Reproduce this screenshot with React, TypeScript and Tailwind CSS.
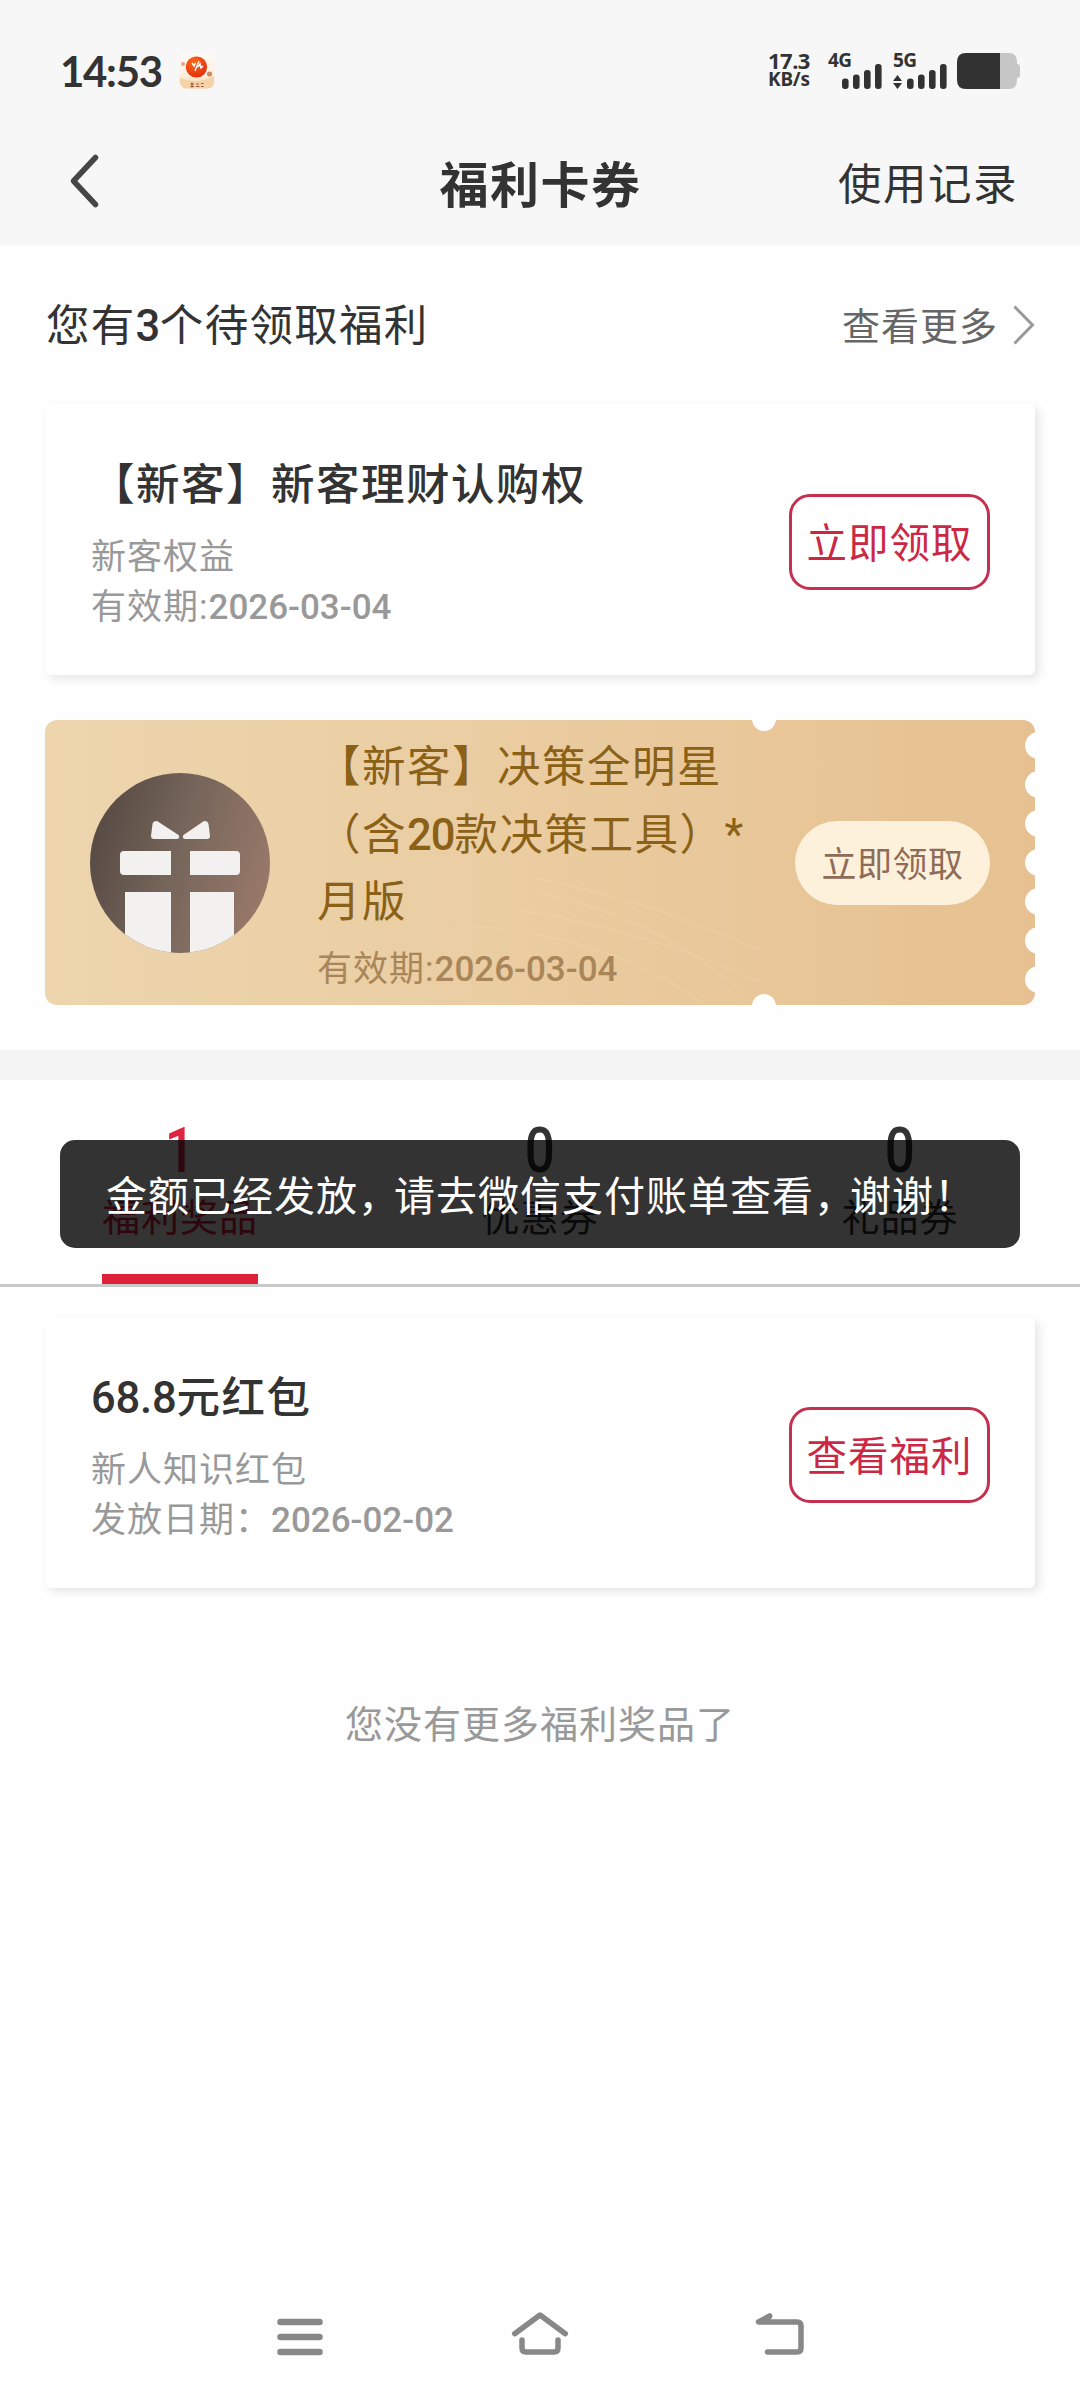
import { clsx } from 'clsx';

interface BenefitCardProps {
  title: string;
  amount?: string;
  subtitle: string;
  dateLabel: string;
  date: string;
  action: string;
}

const TABS = [
  { label: '福利奖品', count: 1, active: true },
  { label: '优惠券', count: 0, active: false },
  { label: '礼品券', count: 0, active: false },
];

const TICKET_TEETH = [0, 1, 2, 3, 4, 5, 6];

function SignalBars() {
  return (
    <svg className="w-10 h-[25px]" viewBox="0 0 40 25" fill="#323232">
      <rect x="0" y="14.5" width="6.6" height="10.5" rx="3" />
      <rect x="11" y="10.5" width="6.6" height="14.5" rx="3" />
      <rect x="22" y="6" width="6.6" height="19" rx="3" />
      <rect x="33" y="0" width="6.6" height="25" rx="3" />
    </svg>
  );
}

function StatusBar() {
  return (
    <div className="h-[124px] pt-[53px] pl-[60px] pr-[60px] flex justify-between items-start">
      <div className="flex items-start">
        <span className="w-[119px] font-[Lato] font-bold text-[42px] leading-9 tracking-[-1.3px] whitespace-nowrap">
          14:53
        </span>
        {/* Notification app icon */}
        <svg className="w-9 h-9" viewBox="0 0 36 36">
          <defs>
            <linearGradient id="appBg" x1="0" y1="0" x2="0" y2="1">
              <stop offset="0" stopColor="#fffaf5" />
              <stop offset="0.65" stopColor="#fdeedd" />
              <stop offset="1" stopColor="#f5c898" />
            </linearGradient>
            <radialGradient id="appBall" cx="0.4" cy="0.3" r="0.75">
              <stop offset="0" stopColor="#fb6b1c" />
              <stop offset="1" stopColor="#e52a0c" />
            </radialGradient>
          </defs>
          <rect x="0.5" y="0.5" width="35" height="35" rx="7" fill="url(#appBg)" />
          <path d="M1 25Q18 32 35 23V28Q35 35 28 35H8Q1 35 1 28Z" fill="#f6d2a8" />
          <circle cx="17.5" cy="14" r="10.6" fill="url(#appBall)" />
          <path d="M13 10l2 3 1.5-3M20 8l-4 10M19 14l2-3 1 4 2-2" stroke="#fff" strokeWidth="1.4" fill="none" />
          <circle cx="4" cy="11" r="2" fill="#ec9c8b" />
          <circle cx="30.5" cy="21" r="2.6" fill="#d08860" />
          <path d="M11.5 31h3.5M11.5 33.5h3.5M13 29.5v5M17 31h3M17 33.5h3.5M22 30.5h2.5M22 33.5h2.5" stroke="#9c5b38" strokeWidth="1.2" />
        </svg>
      </div>

      <div className="flex items-start h-9 font-['Noto_Sans'] font-bold">
        <div className="w-[60px] flex flex-col whitespace-nowrap">
          <span className="text-[22px] leading-[15px] tracking-[-0.5px]">17.3</span>
          <span className="text-[19px] leading-[19px] pt-0.5 tracking-[-0.2px]">KB/s</span>
        </div>
        <div className="w-[65px] relative pt-[11px] pl-3.5">
          <span className="absolute left-0 top-0 text-[19px] leading-[14px] tracking-[-0.5px]">4G</span>
          <SignalBars />
        </div>
        <div className="w-16 relative pt-[11px] pl-3.5">
          <span className="absolute left-0 top-0 text-[19px] leading-[14px] tracking-[-0.5px]">5G</span>
          <svg className="absolute left-0 bottom-0 w-[9px] h-[14px]" viewBox="0 0 9 14" fill="#323232">
            <path d="M4.5 0L9 6H0ZM4.5 14L9 8H0Z" />
          </svg>
          <SignalBars />
        </div>
        <svg className="w-[63px] h-9" viewBox="0 0 63 36">
          <path d="M43 0H52Q60 0 60 9V11Q63 11 63 14V22Q63 25 60 25V27Q60 36 52 36H43Z" fill="#c6c6c6" />
          <path d="M9 0H43V36H9Q0 36 0 27V9Q0 0 9 0Z" fill="#323232" />
        </svg>
      </div>
    </div>
  );
}

function Header() {
  return (
    <header className="h-[121px] grid grid-cols-3 items-center pl-[67px] pr-[62px]">
      <svg className="w-9 h-[60px] -mt-2" viewBox="0 0 36 60" fill="none">
        <path d="M28.500 6.500L6.500 30L28.500 53.500" stroke="#464646" strokeWidth="5.500" strokeLinecap="round" strokeLinejoin="round" />
      </svg>
      <h1 className="text-center text-[49px] leading-none font-bold tracking-[1.5px] whitespace-nowrap pr-1 pt-1">
        福利卡券
      </h1>
      <span className="text-right text-[43.5px] leading-none tracking-[1.5px] pt-0.5">使用记录</span>
    </header>
  );
}

function BenefitCard({ title, amount, subtitle, dateLabel, date, action }: BenefitCardProps) {
  return (
    <div className="mx-[45px] h-[271px] px-[45px] rounded-md bg-white shadow-[4px_4px_9px_rgba(0,0,0,0.09)] flex justify-between">
      <div className="pt-[49px] pl-px whitespace-nowrap">
        <h3 className="text-[43.5px] leading-[66px] font-medium tracking-[1.5px]">
          {amount && <span className="tracking-[-0.2px]">{amount}</span>}
          {title}
        </h3>
        <p className="mt-3.5 text-[35px] leading-[50px] tracking-[1px] text-[#999]">{subtitle}</p>
        <p className="text-[35px] leading-[50px] tracking-[1px] text-[#999]">
          {dateLabel}
          <span className="font-medium tracking-normal">{date}</span>
        </p>
      </div>
      <button className="mt-[90px] w-[201px] h-24 pt-1 rounded-[21px] border-3 border-[#c5304f] text-[#cc2845] text-[40.5px] leading-none tracking-[1px] whitespace-nowrap">
        {action}
      </button>
    </div>
  );
}

function GiftIcon() {
  return (
    <svg className="w-[180px] h-[180px] mt-[53px]" viewBox="0 0 180 180">
      <defs>
        <linearGradient id="giftBg" x1="0" y1="0.3" x2="1" y2="0.6">
          <stop offset="0" stopColor="#564a43" />
          <stop offset="0.5" stopColor="#77665b" />
          <stop offset="1" stopColor="#98796a" />
        </linearGradient>
        <clipPath id="giftClip">
          <circle cx="90" cy="90" r="90" />
        </clipPath>
      </defs>
      <circle cx="90" cy="90" r="90" fill="url(#giftBg)" />
      <g clipPath="url(#giftClip)" fill="#f3f1ef">
        <path d="M67 48Q63 48 62.500 51L61 63Q61 66 64 66H87Q90.500 65 88.500 62Z" />
        <path d="M114 48Q118 48 118.500 51L120 63Q120 66 117 66H95Q91.500 65 93.500 62Z" />
        <path d="M34 78H81V102H34Q30 102 30 98V82Q30 78 34 78Z" />
        <path d="M100 78H146Q150 78 150 82V98Q150 102 146 102H100Z" />
        <path d="M35 119H81V180H35ZM100 119H144V180H100Z" />
      </g>
    </svg>
  );
}

function Ticket() {
  return (
    <div className="relative mx-[45px] mt-[45px] h-[285px] px-[45px] rounded-xl overflow-hidden bg-linear-to-r from-[#edd5ae] via-[#eacca0] to-[#e6c090] flex">
      <svg className="absolute inset-0 w-full h-full" viewBox="0 0 990 285" fill="none" stroke="#f3dcb4" strokeOpacity="0.25" strokeWidth="2">
        <path d="M490 158Q600 180 715 230M490 172Q620 200 700 275M400 205Q560 210 660 285M440 185Q590 205 715 262" />
      </svg>
      <GiftIcon />
      <div className="relative ml-[47px] pt-3.5 w-[450px]">
        <h3 className="text-[43.5px] leading-[67.5px] tracking-[1.5px] text-[#8a6117] whitespace-nowrap">
          【新客】决策全明星
          <br />
          （含<span className="font-medium tracking-[-1px]">20</span>款决策工具）*
          <br />
          月版
        </h3>
        <p className="mt-2 text-[35px] leading-[50px] tracking-[1px] text-[#a98659]">
          有效期:<span className="font-medium tracking-normal">2026-03-04</span>
        </p>
      </div>
      <button className="relative ml-auto mt-[101px] w-[195px] h-[84px] pt-[5px] rounded-full bg-[#fef1dc] text-[35px] leading-none tracking-[0.5px] text-[#8f6c58] whitespace-nowrap">
        立即领取
      </button>

      {/* Punched holes */}
      <span className="absolute left-[707px] -top-[13px] w-6 h-6 rounded-full bg-white" />
      <span className="absolute left-[707px] -bottom-[13px] w-6 h-6 rounded-full bg-white" />
      <div className="absolute -right-[17px] top-3 flex flex-col gap-3">
        {TICKET_TEETH.map((tooth) => (
          <span key={tooth} className="w-[27px] h-[27px] rounded-full bg-white" />
        ))}
      </div>
    </div>
  );
}

function Toast() {
  return (
    <div className="absolute left-[60px] top-[60px] w-[960px] h-[108px] pl-[46px] pt-[3px] rounded-[15px] bg-black/80 text-white text-[41px] leading-[108px] tracking-[1px] whitespace-nowrap">
      金额已经发放<span className="tracking-[-5px]">，</span>请去微信支付账单查看<span className="tracking-[-5px]">，</span>谢谢！
    </div>
  );
}

function Tabs() {
  return (
    <div className="relative h-[207px] border-b-3 border-[#c9c9c9] grid grid-cols-3">
      {TABS.map((tab) => (
        <div key={tab.label} className={clsx('flex flex-col items-center', tab.active ? 'text-[#df2340]' : 'text-[#333]')}>
          <span className="mt-[38px] h-[66px] text-[63px] leading-[66px] font-medium scale-x-[0.84]">{tab.count}</span>
          <span className="mt-3 text-[38px] leading-[44px] tracking-[1px]">{tab.label}</span>
          {tab.active && <span className="mt-auto w-[156px] h-2.5 bg-[#df2039]" />}
        </div>
      ))}
      <Toast />
    </div>
  );
}

function NavBar() {
  return (
    <nav className="h-[102px] flex justify-around px-[180px] text-[#888]">
      <svg className="w-[60px] h-[60px]" viewBox="0 0 60 60" fill="none" stroke="currentColor" strokeWidth="6.500" strokeLinecap="round">
        <path d="M10.500 24H49.500M10.500 39H49.500M10.500 54H49.500" />
      </svg>
      <svg className="w-[60px] h-[60px]" viewBox="0 0 60 60" fill="none" stroke="currentColor" strokeWidth="5.500" strokeLinecap="round" strokeLinejoin="round">
        <path d="M4.700 35.700L30 17L55.300 35.700M12 42V50Q12 54 16 54H44Q48 54 48 50V42" />
      </svg>
      <svg className="w-[60px] h-[60px]" viewBox="0 0 60 60" fill="none" stroke="currentColor" strokeWidth="5.500" strokeLinecap="round" strokeLinejoin="round">
        <path d="M19.700 18L8.500 24H47Q51 24 51 28V50Q51 54 47 54H17.500M12 23L19 19" />
      </svg>
    </nav>
  );
}

export default function App() {
  return (
    <div
      lang="zh-CN"
      className="w-[1080px] h-[2400px] flex flex-col overflow-hidden bg-[#fefefe] text-[#333] font-[Roboto,'Noto_Sans_CJK_SC',sans-serif]"
    >
      <div className="bg-[#f7f7f7]">
        <StatusBar />
        <Header />
      </div>

      <section className="h-[805px]">
        <div className="h-[159px] px-[45px] flex items-center justify-between">
          <h2 className="text-[43.5px] leading-none tracking-[1.3px] pt-1 pl-px">
            您有<span className="font-medium tracking-[-0.5px]">3</span>个待领取福利
          </h2>
          <div className="flex items-center text-[#666]">
            <span className="text-[38px] leading-none tracking-[1px] pt-[5px]">查看更多</span>
            <svg className="w-[22px] h-10 ml-[15px] mt-px" viewBox="0 0 22 40" fill="none">
              <path d="M1.500 1.500L19.500 20L1.500 38.500" stroke="#999" strokeWidth="3" />
            </svg>
          </div>
        </div>
        <BenefitCard
          title="【新客】新客理财认购权"
          subtitle="新客权益"
          dateLabel="有效期:"
          date="2026-03-04"
          action="立即领取"
        />
        <Ticket />
      </section>

      <div className="h-[30px] bg-[#f4f4f4]" />
      <Tabs />

      <section className="flex-1 pt-[30px]">
        <BenefitCard
          amount="68.8"
          title="元红包"
          subtitle="新人知识红包"
          dateLabel="发放日期："
          date="2026-02-02"
          action="查看福利"
        />
        <p className="mt-[112px] text-center text-[38px] leading-[50px] tracking-[1px] text-[#999]">
          您没有更多福利奖品了
        </p>
      </section>

      <NavBar />
    </div>
  );
}
